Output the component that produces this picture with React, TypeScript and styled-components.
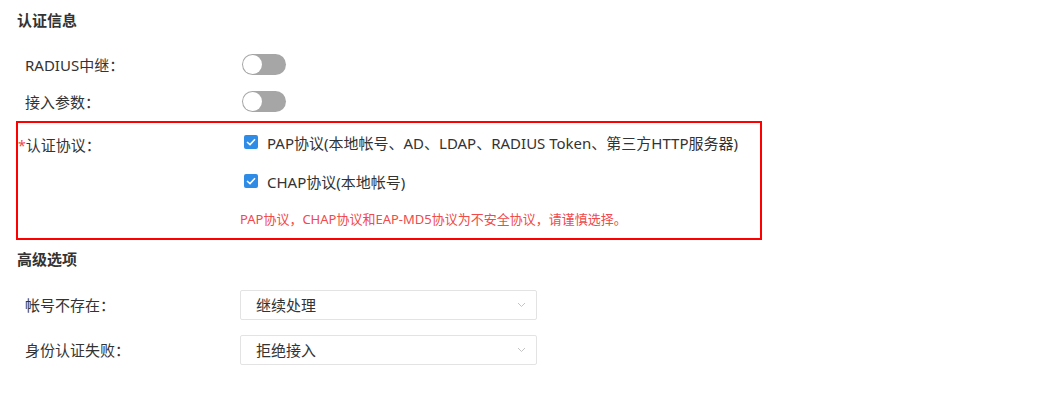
import styled, { createGlobalStyle } from "styled-components";

const GlobalStyle = createGlobalStyle`
  body {
    margin: 0;
    background: #fff;
    font-family: "Noto Sans", "Noto Sans CJK SC", sans-serif;
    color: #333;
  }
`;

const App = () => {
  return (
    <>
      <GlobalStyle />
      <Page>
        <SectionTitle>认证信息</SectionTitle>
        <Row $height={37} $top={16}>
          <Label>RADIUS中继：</Label>
          <Toggle />
        </Row>
        <Row $height={37}>
          <Label>接入参数：</Label>
          <Toggle />
        </Row>

        <HighlightBox>
          <BoxLabel>
            <Star>*</Star>认证协议：
          </BoxLabel>
          <Options>
            <CheckRow>
              <CheckBox>
                <svg width="10" height="8" viewBox="0 0 10 8">
                  <path d="M1 4 L4 6.6 L9 1.2" fill="none" stroke="#fff" strokeWidth="1.5" />
                </svg>
              </CheckBox>
              PAP协议(本地帐号、AD、LDAP、RADIUS Token、第三方HTTP服务器)
            </CheckRow>
            <CheckRow>
              <CheckBox>
                <svg width="10" height="8" viewBox="0 0 10 8">
                  <path d="M1 4 L4 6.6 L9 1.2" fill="none" stroke="#fff" strokeWidth="1.5" />
                </svg>
              </CheckBox>
              CHAP协议(本地帐号)
            </CheckRow>
            <Warning>PAP协议，CHAP协议和EAP-MD5协议为不安全协议，请谨慎选择。</Warning>
          </Options>
        </HighlightBox>

        <SectionTitle $top={9}>高级选项</SectionTitle>
        <Row $height={45} $top={13}>
          <Label>帐号不存在：</Label>
          <Select>
            继续处理
            <Chevron />
          </Select>
        </Row>
        <Row $height={45}>
          <Label>身份认证失败：</Label>
          <Select>
            拒绝接入
            <Chevron />
          </Select>
        </Row>
      </Page>
    </>
  );
};

export default App;

const Chevron = () => (
  <svg width="9" height="6" viewBox="0 0 9 6">
    <path d="M1 1 L4.5 4.5 L8 1" fill="none" stroke="#c4c4c4" strokeWidth="1" />
  </svg>
);

const Page = styled.div`
  width: 1052px;
  height: 401px;
  padding-top: 10px;
  box-sizing: border-box;
  font-size: 15px;
`;

const SectionTitle = styled.div<{ $top?: number }>`
  margin-top: ${(p) => p.$top ?? 0}px;
  padding-left: 17px;
  height: 20px;
  line-height: 20px;
  font-size: 15px;
  font-weight: 700;
  color: #333;
`;

const Row = styled.div<{ $height: number; $top?: number }>`
  display: grid;
  grid-template-columns: 215px 1fr;
  align-items: center;
  height: ${(p) => p.$height}px;
  margin-top: ${(p) => p.$top ?? 0}px;
  padding-left: 25px;
`;

const Label = styled.div`
  font-size: 15px;
  color: #333;
  line-height: 20px;
`;

const Toggle = styled.div`
  position: relative;
  width: 44px;
  height: 21px;
  margin-left: 2px;
  border-radius: 11px;
  background: #a6a6a6;

  &::after {
    content: "";
    position: absolute;
    left: 1px;
    top: 1px;
    width: 19px;
    height: 19px;
    border-radius: 50%;
    background: #fff;
  }
`;

const HighlightBox = styled.div`
  display: grid;
  grid-template-columns: 222px 1fr;
  width: 746px;
  height: 119px;
  margin: 1px 0 0 16px;
  box-sizing: border-box;
  border: 2px solid #ff0000;
  padding-top: 9px;
`;

const BoxLabel = styled.div`
  margin-top: 3px;
  line-height: 20px;
  font-size: 15px;
  color: #333;
`;

const Star = styled.span`
  color: #f04848;
  font-size: 14px;
`;

const Options = styled.div`
  display: flex;
  flex-direction: column;
`;

const CheckRow = styled.div`
  display: flex;
  align-items: center;
  height: 20px;
  margin-bottom: 19px;
  padding-left: 4px;
  font-size: 15px;
  color: #333;
`;

const CheckBox = styled.span`
  display: inline-flex;
  align-items: center;
  justify-content: center;
  width: 14px;
  height: 14px;
  margin-right: 9px;
  border-radius: 2px;
  background: #2f8ce6;
`;

const Warning = styled.div`
  margin-top: 0;
  font-size: 13px;
  line-height: 18px;
  color: #f04a4a;
`;

const Select = styled.div`
  display: flex;
  align-items: center;
  justify-content: space-between;
  width: 297px;
  height: 30px;
  box-sizing: border-box;
  padding: 0 10px 0 15px;
  border: 1px solid #e3e3e3;
  border-radius: 2px;
  font-size: 15px;
  color: #333;
  background: #fff;
`;
